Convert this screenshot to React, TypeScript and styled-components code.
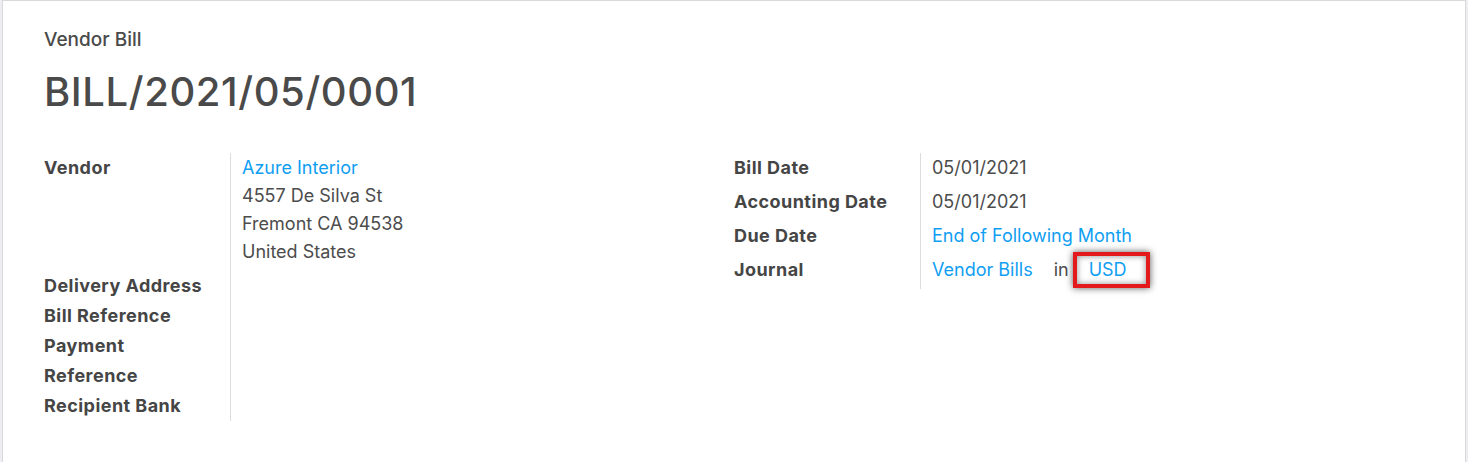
import React from "react";
import styled, { createGlobalStyle } from "styled-components";

const Global = createGlobalStyle`
  html, body { margin: 0; padding: 0; background: #eceef1; }
  body { font-family: Inter, Roboto, "Liberation Sans", sans-serif; color: #4c4c4c; }
  * { box-sizing: border-box; }
`;

const Sheet = styled.div`
  margin: 0 2px;
  min-height: 462px;
  background: #ffffff;
  border: 1px solid #d9d9d9;
  border-bottom: none;
  padding: 27px 41px 0 41px;
`;

const Kind = styled.div`
  font-size: 19px;
  line-height: 24px;
  font-weight: 500;
  color: #4a4a4a;
`;

const Title = styled.h1`
  margin: 16px 0 0 0;
  font-size: 40px;
  line-height: 48px;
  font-weight: 500;
  letter-spacing: 0.6px;
  color: #4a4a4a;
`;

const Groups = styled.div`
  display: grid;
  grid-template-columns: 690px 690px;
  margin-top: 37px;
`;

const Group = styled.div`
  display: grid;
  grid-template-columns: 187px 1fr;
  align-content: start;
`;

const Label = styled.div<{ $h?: number }>`
  font-size: 18px;
  line-height: 30px;
  font-weight: 700;
  letter-spacing: 0.45px;
  color: #454545;
  border-right: 1px solid #dcdcdc;
  ${(p) => (p.$h ? `height: ${p.$h}px;` : "")}
`;

const Value = styled.div<{ $h?: number }>`
  padding-left: 11px;
  font-size: 18px;
  line-height: 30px;
  color: #4c4c4c;
  ${(p) => (p.$h ? `height: ${p.$h}px;` : "")}
`;

const Address = styled.div`
  padding-top: 1px;
  line-height: 28px;
`;

const Link = styled.span`
  color: #0f9ef2;
`;

const In = styled.span`
  margin: 0 4px 0 21px;
`;

const Highlight = styled.span`
  position: relative;
  top: 2px;
  display: inline-block;
  line-height: 26px;
  padding: 1px 19px 1px 12px;
  border: 4px solid #e3191b;
  box-shadow: 0 0 7px rgba(0, 0, 0, 0.65), inset 0 0 6px rgba(0, 0, 0, 0.45);
  color: #0f9ef2;
  vertical-align: middle;
  margin-top: -6px;
`;

export default function App() {
  return (
    <>
      <Global />
      <Sheet>
        <Kind>Vendor Bill</Kind>
        <Title>BILL/2021/05/0001</Title>
        <Groups>
          <Group>
            <Label $h={118}>Vendor</Label>
            <Value $h={118}>
              <Address>
                <Link>Azure Interior</Link>
                <br />
                4557 De Silva St
                <br />
                Fremont CA 94538
                <br />
                United States
              </Address>
            </Value>
            <Label>Delivery Address</Label>
            <Value />
            <Label>Bill Reference</Label>
            <Value />
            <Label>
              Payment
              <br />
              Reference
            </Label>
            <Value />
            <Label>Recipient Bank</Label>
            <Value />
          </Group>
          <Group>
            <Label $h={34}>Bill Date</Label>
            <Value $h={34}>05/01/2021</Value>
            <Label $h={34}>Accounting Date</Label>
            <Value $h={34}>05/01/2021</Value>
            <Label $h={34}>Due Date</Label>
            <Value $h={34}>
              <Link>End of Following Month</Link>
            </Value>
            <Label $h={34}>Journal</Label>
            <Value $h={34}>
              <Link>Vendor Bills</Link>
              <In>in</In>
              <Highlight>USD</Highlight>
            </Value>
          </Group>
        </Groups>
      </Sheet>
    </>
  );
}
